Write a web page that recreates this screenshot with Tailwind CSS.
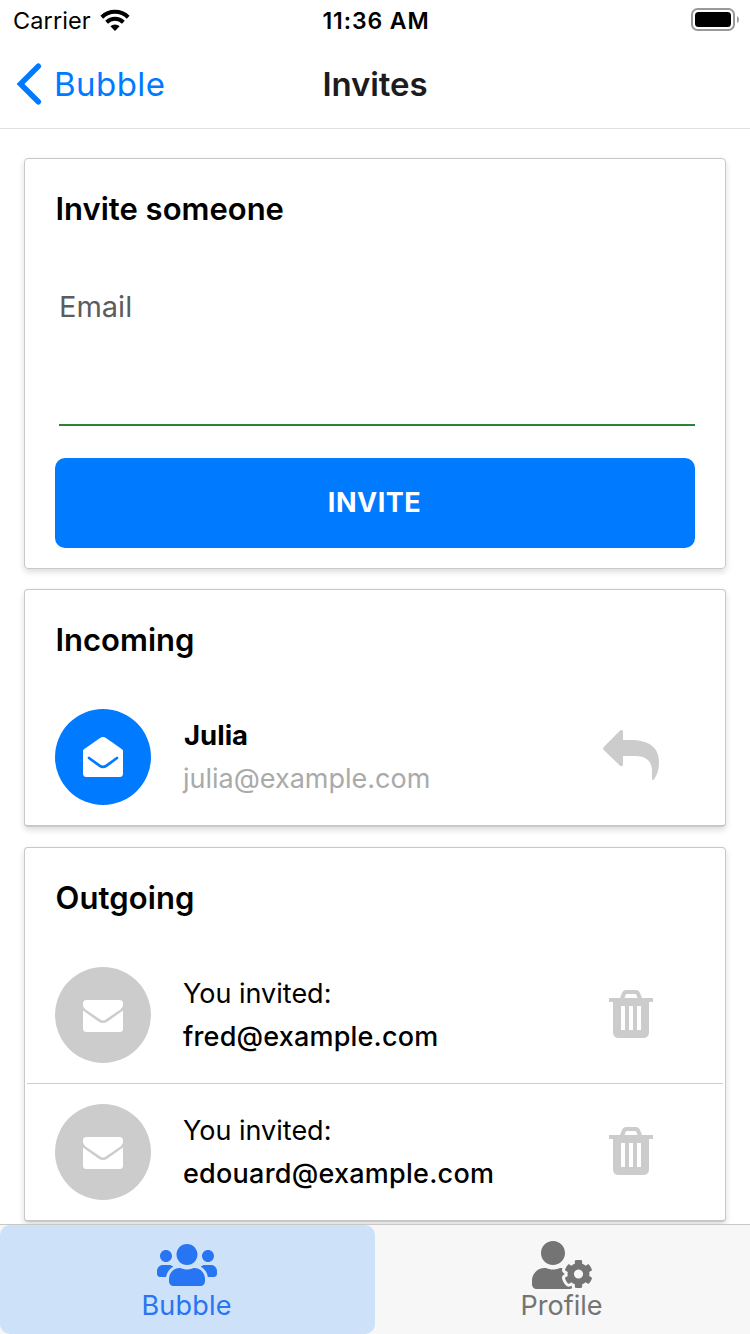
<!DOCTYPE html>
<html lang="en">
<head>
<meta charset="utf-8">
<title>Invites</title>
<script src="https://cdn.jsdelivr.net/npm/@tailwindcss/browser@4"></script>
</head>
<body class="bg-white">
<div class="flex h-[1334px] w-[750px] flex-col overflow-hidden bg-white font-['Inter',sans-serif] text-black">
  <header class="h-[129px] shrink-0 border-b border-[#dfdfdf]">
    <div class="grid h-10 grid-cols-3 items-center pr-[11px] pl-[13px]">
      <div class="flex items-center gap-[9px] pt-px">
        <span class="text-[23.5px] leading-none tracking-[0.1px]">Carrier</span>
        <svg class="mb-px h-[22px] w-[30px]" viewBox="0 0 30 22" fill="none" stroke="#000"><path d="M1.8 8.2A19 19 0 0 1 28.2 8.2" stroke-width="4"/><path d="M6.6 13.2A12.2 12.2 0 0 1 23.4 13.2" stroke-width="4"/><path d="M15 22L10.4 17.3A6.6 6.6 0 0 1 19.6 17.3Z" fill="#000" stroke="none"/></svg>
      </div>
      <span class="pt-[2px] text-center text-[23px] leading-none font-semibold tracking-[0.9px]">11:36 AM</span>
      <svg class="h-6 w-12 justify-self-end" viewBox="0 0 48 24"><rect x="1" y="1" width="42" height="21" rx="5.5" fill="none" stroke="#999" stroke-width="2"/><rect x="4" y="4" width="36" height="15" rx="3.5"/><path d="M46 8q2 1 2 3.500t-2 3.500z" fill="#999"/></svg>
    </div>
    <div class="grid h-[88px] grid-cols-3 items-center px-4">
      <div class="flex items-center gap-3 text-[#007aff]">
        <svg class="mb-px h-[42px] w-[26px]" viewBox="0 0 26 42" fill="none" stroke="#007aff" stroke-width="5.500" stroke-linecap="round" stroke-linejoin="miter"><path d="M22.300 3.200L4.500 21L22.300 38.800"/></svg>
        <span class="text-[33px] leading-none tracking-[0.45px]">Bubble</span>
      </div>
      <h1 class="text-center text-[33px] leading-none font-semibold tracking-[-0.1px] text-[#1c1c1e]">Invites</h1>
    </div>
  </header>

  <main class="flex min-h-0 flex-1 flex-col gap-5 overflow-hidden px-6 pt-[29px]">
    <section class="h-[411px] shrink-0 rounded-[4px] border border-[#c8c8c8] px-[30px] pt-[30px] shadow-[0_3px_6px_rgba(0,0,0,0.14)]">
      <h2 class="h-10 pl-[0.5px] text-[31px] leading-10 font-semibold">Invite someone</h2>
      <label class="mt-[60px] ml-1 flex h-[137px] flex-col border-b-2 border-[#2a8436] text-[29px] leading-[36px] text-[#5c5c5c]">Email</label>
      <button class="mt-8 flex h-[90px] w-full items-center justify-center rounded-[10px] bg-[#007aff] pr-px text-[27px] font-bold tracking-[0.5px] text-white">INVITE</button>
    </section>

    <section class="h-[238px] shrink-0 rounded-[4px] border border-b-2 border-[#c8c8c8] px-[30px] pt-[30px] shadow-[0_3px_6px_rgba(0,0,0,0.14)]">
      <h2 class="h-10 pl-[0.5px] text-[31px] leading-10 font-semibold">Incoming</h2>
      <div class="mt-[49px] flex h-24 items-center">
        <div class="flex size-24 items-center justify-center rounded-full bg-[#007aff]">
          <svg class="size-10" viewBox="0 0 40 40"><path d="M0 14Q0 13 1 12.300L17 1Q20-1 23 1L39 12.300Q40 13 40 14V36.500Q40 40 36.500 40H3.500Q0 40 0 36.500Z" fill="#fff"/><path d="M6 21L16.500 28.600Q20 31.200 23.500 28.600L34 21" fill="none" stroke="#007aff" stroke-width="2.700" stroke-linecap="round"/></svg>
        </div>
        <div class="ml-8 flex-1 text-[27px] leading-[43px]">
          <p class="pl-px text-[27.5px] font-bold">Julia</p>
          <p class="text-[#aaa]">julia@example.com</p>
        </div>
        <svg class="mr-9 mb-1 h-[50px] w-14" viewBox="0 0 56 50" fill="#ccc"><path d="M.8 17Q-.6 18.500.8 20L16.800 35.500Q18 36.500 19.200 36Q20 35.500 20 34.500V26H32C45 26 49 33 49 41V49Q49.500 50.500 51 49.500C54.500 44 56 39 56 32C56 16 44 10 28 10H20V1.500Q20 .5 19.200.1Q18-.3 16.800.800Z"/></svg>
      </div>
    </section>

    <section class="h-[375px] shrink-0 rounded-[4px] border border-b-2 border-[#c8c8c8] px-[2px] pt-[30px] shadow-[0_3px_6px_rgba(0,0,0,0.14)]">
      <h2 class="ml-7 h-10 pl-[0.5px] text-[31px] leading-10 font-semibold tracking-[0.1px]">Outgoing</h2>
      <div class="mt-[29px] flex h-[137px] items-center border-b border-[#ccc] px-7">
        <div class="flex size-24 items-center justify-center rounded-full bg-[#ccc]">
          <svg class="mt-[2px] h-8 w-10" viewBox="0 0 40 32" fill="#fff"><path d="M3.500 0H36.500Q40 0 40 3.500V5Q40 7.500 37.500 9.500L23.500 19Q20 22 16.500 19L2.500 9.500Q0 7.500 0 5V3.500Q0 0 3.500 0Z"/><path d="M0 10.500L15.500 21.500Q20 24.500 24.500 21.500L40 10.500V28.500Q40 32 36.500 32H3.500Q0 32 0 28.500Z"/></svg>
        </div>
        <div class="ml-8 flex-1 text-[27px] leading-[43px]">
          <p>You invited:</p>
          <p class="font-medium tracking-[0.2px]">fred@example.com</p>
        </div>
        <svg class="mr-[42px] mb-[2px] h-12 w-11" viewBox="0 0 44 48" fill="#ccc"><path fill-rule="evenodd" d="M0 8H11L13 3Q14.200 0 17 0H27Q29.800 0 31 3L33 8H44V12H40V42Q40 48 34 48H10Q4 48 4 42V12H0ZM15.500 8H28.500L27.500 5Q27.200 4 26 4H18Q16.800 4 16.500 5ZM12 16V40H16V16ZM20 16V40H24V16ZM28 16V40H32V16Z"/></svg>
      </div>
      <div class="flex h-[136px] items-center px-7">
        <div class="flex size-24 items-center justify-center rounded-full bg-[#ccc]">
          <svg class="mt-[2px] h-8 w-10" viewBox="0 0 40 32" fill="#fff"><path d="M3.500 0H36.500Q40 0 40 3.500V5Q40 7.500 37.500 9.500L23.500 19Q20 22 16.500 19L2.500 9.500Q0 7.500 0 5V3.500Q0 0 3.500 0Z"/><path d="M0 10.500L15.500 21.500Q20 24.500 24.500 21.500L40 10.500V28.500Q40 32 36.500 32H3.500Q0 32 0 28.500Z"/></svg>
        </div>
        <div class="ml-8 flex-1 text-[27px] leading-[43px]">
          <p>You invited:</p>
          <p class="font-medium tracking-[0.24px]">edouard@example.com</p>
        </div>
        <svg class="mr-[42px] mb-[2px] h-12 w-11" viewBox="0 0 44 48" fill="#ccc"><path fill-rule="evenodd" d="M0 8H11L13 3Q14.200 0 17 0H27Q29.800 0 31 3L33 8H44V12H40V42Q40 48 34 48H10Q4 48 4 42V12H0ZM15.500 8H28.500L27.500 5Q27.200 4 26 4H18Q16.800 4 16.500 5ZM12 16V40H16V16ZM20 16V40H24V16ZM28 16V40H32V16Z"/></svg>
      </div>
    </section>
  </main>

  <nav class="grid h-[110px] shrink-0 grid-cols-2 border-t border-[#c8c8c8] bg-[#f7f7f7] text-[27px] leading-[34px]">
    <a class="flex flex-col items-center rounded-[10px] bg-[#cde1f9] pt-4 pr-[2px] text-[#2775f2]">
      <svg class="h-12 w-[60px]" viewBox="0 0 640 512" fill="currentColor"><path d="M96 224c35.3 0 64-28.7 64-64s-28.7-64-64-64-64 28.7-64 64 28.7 64 64 64zm448 0c35.3 0 64-28.7 64-64s-28.7-64-64-64-64 28.7-64 64 28.7 64 64 64zm32 32h-64c-17.6 0-33.5 7.1-45.1 18.6 40.3 22.1 68.9 62 75.1 109.4h66c17.7 0 32-14.3 32-32v-32c0-35.3-28.7-64-64-64zm-256 0c61.9 0 112-50.1 112-112S381.9 32 320 32 208 82.1 208 144s50.1 112 112 112zm76.8 32h-8.3c-20.8 10-43.9 16-68.5 16s-47.6-6-68.5-16h-8.3C179.6 288 128 339.6 128 403.2V432c0 26.5 21.5 48 48 48h288c26.500 0 48-21.500 48-48v-28.800c0-63.600-51.600-115.200-115.200-115.200zm-223.700-13.400C161.500 263.100 145.600 256 128 256H64c-35.300 0-64 28.700-64 64v32c0 17.700 14.300 32 32 32h65.900c6.300-47.400 34.900-87.300 75.200-109.400z"/></svg>
      <span class="tracking-[0.2px]">Bubble</span>
    </a>
    <a class="flex flex-col items-center pt-4 pr-[2px] text-[#747474]">
      <svg class="h-12 w-[60px]" viewBox="0 0 640 512" fill="currentColor"><path d="M610.500 373.300c2.600-14.100 2.600-28.500 0-42.600l25.800-14.900c3-1.700 4.300-5.200 3.300-8.500-6.700-21.600-18.200-41.200-33.200-57.400-2.300-2.500-6-3.100-9-1.400l-25.800 14.900c-10.900-9.300-23.400-16.500-36.900-21.300v-29.800c0-3.400-2.400-6.400-5.700-7.100-22.300-5-45-4.800-66.200 0-3.300.7-5.700 3.700-5.700 7.100v29.800c-13.500 4.800-26 12-36.900 21.300l-25.800-14.900c-2.900-1.700-6.700-1.100-9 1.400-15 16.200-26.500 35.800-33.200 57.400-1 3.300.4 6.800 3.300 8.500l25.800 14.900c-2.600 14.100-2.600 28.500 0 42.600l-25.800 14.900c-3 1.700-4.300 5.200-3.300 8.500 6.700 21.600 18.200 41.100 33.200 57.400 2.300 2.500 6 3.100 9 1.400l25.800-14.900c10.900 9.300 23.400 16.500 36.900 21.300v29.800c0 3.400 2.400 6.400 5.700 7.100 22.300 5 45 4.800 66.200 0 3.300-.7 5.700-3.700 5.700-7.100v-29.800c13.500-4.800 26-12 36.900-21.300l25.800 14.900c2.900 1.700 6.700 1.100 9-1.400 15-16.200 26.500-35.800 33.200-57.400 1-3.300-.4-6.800-3.300-8.500l-25.800-14.900zM496 400.500c-26.800 0-48.500-21.800-48.500-48.500s21.800-48.500 48.500-48.500 48.500 21.800 48.500 48.500-21.700 48.500-48.500 48.500zM224 256c70.700 0 128-57.300 128-128S294.700 0 224 0 96 57.300 96 128s57.300 128 128 128zm201.200 226.500c-2.300-1.200-4.600-2.600-6.800-3.900l-7.900 4.600c-6 3.400-12.800 5.300-19.600 5.300-10.900 0-21.400-4.600-28.900-12.600-18.300-19.800-32.300-43.900-40.200-69.600-5.500-17.700 1.900-36.400 17.900-45.700l7.900-4.600c-.1-2.600-.1-5.200 0-7.800l-7.900-4.600c-16-9.200-23.400-28-17.900-45.700.9-2.900 2.200-5.800 3.200-8.700-3.800-.3-7.500-1.200-11.400-1.200h-16.700c-22.200 10.200-46.900 16-72.900 16s-50.600-5.800-72.900-16h-16.700C60.200 288 0 348.200 0 422.400V464c0 26.500 21.500 48 48 48h352c10.100 0 19.500-3.200 27.200-8.500-1.200-3.800-2-7.700-2-11.800v-9.200z"/></svg>
      <span>Profile</span>
    </a>
  </nav>
</div>
</body>
</html>
